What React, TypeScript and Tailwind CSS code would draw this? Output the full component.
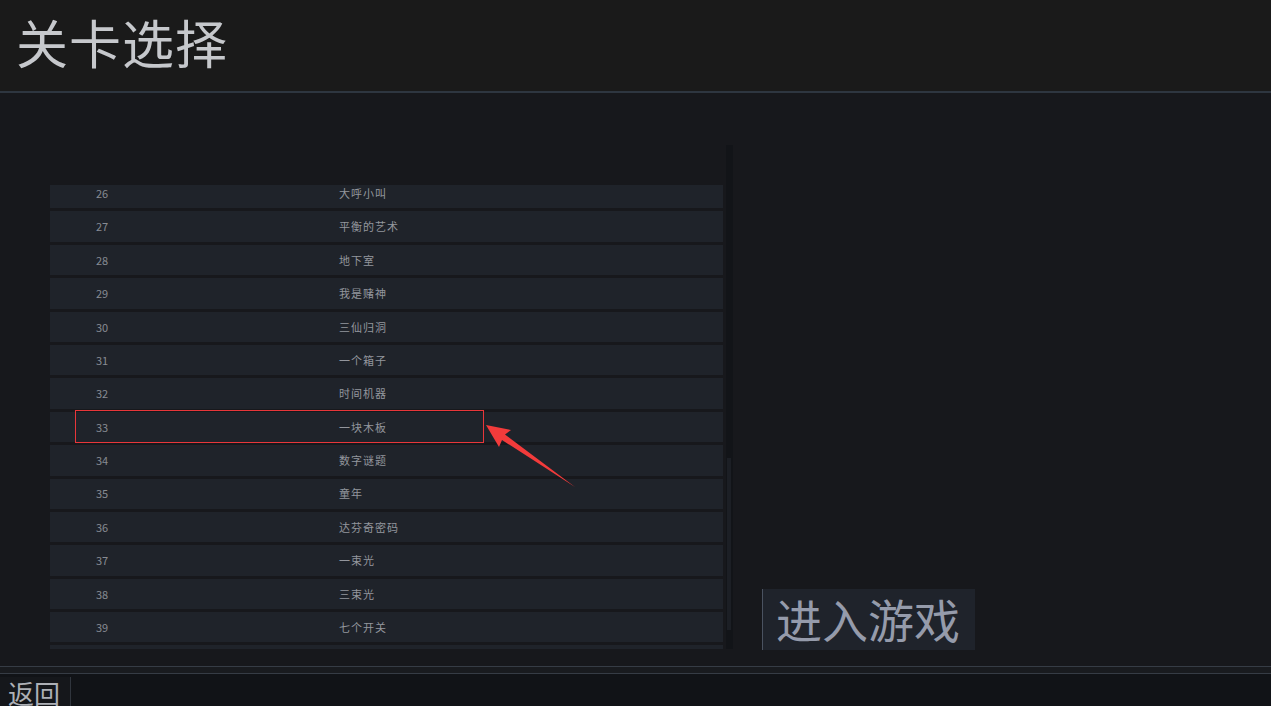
import React from "react";

const levels: [string, string][] = [
  ["26", "大呼小叫"],
  ["27", "平衡的艺术"],
  ["28", "地下室"],
  ["29", "我是赌神"],
  ["30", "三仙归洞"],
  ["31", "一个箱子"],
  ["32", "时间机器"],
  ["33", "一块木板"],
  ["34", "数字谜题"],
  ["35", "童年"],
  ["36", "达芬奇密码"],
  ["37", "一束光"],
  ["38", "三束光"],
  ["39", "七个开关"],
  ["", ""],
];

const font = { fontFamily: '"Noto Sans CJK SC", "Noto Sans", sans-serif' };

export default function App() {
  return (
    <div
      className="w-[1271px] h-[706px] overflow-hidden flex flex-col bg-[#17181c] relative"
      style={font}
    >
      {/* Header */}
      <div className="h-[93px] shrink-0 bg-[#1a1a1a] border-b-2 border-[#2e3640] flex items-center pl-[16px]">
        <span className="text-[52px] leading-none text-[#c6c8cc] tracking-[1px] -mt-[8px]">
          关卡选择
        </span>
      </div>

      {/* Main */}
      <div className="h-[573px] shrink-0 flex">
        <div className="ml-[50px] mt-[52px] w-[683px] h-[504px] flex">
          <div className="w-[673px] flex flex-col">
            <div className="h-[40px] shrink-0" />
            <div className="flex-1 overflow-hidden">
              <div className="flex flex-col gap-[3px] -mt-[7px]">
                {levels.map(([n, name], i) => (
                  <div
                    key={i}
                    className="h-[30.4px] shrink-0 bg-[#1f232a] flex items-center text-[11px] text-[#878b93]"
                  >
                    <span className="w-[289px] pl-[46px]">{n}</span>
                    <span className="tracking-[1px] text-[#93969d]">{name}</span>
                  </div>
                ))}
              </div>
            </div>
          </div>
          <div className="ml-[3px] w-[7px] h-[504px] bg-[#121418] flex flex-col pt-[313px]">
            <div className="ml-[1px] w-[4px] h-[172px] bg-[#1c1f25]" />
          </div>
        </div>

        <div className="ml-[29px] mt-[496px]">
          <div className="w-[213px] h-[61px] bg-[#1f232b] border-l border-[#4a5260] flex items-center pl-[13px]">
            <span className="text-[46px] leading-none text-[#959bab] -mt-[4px]">进入游戏</span>
          </div>
        </div>
      </div>

      {/* Footer separators */}
      <div className="h-[8px] shrink-0 border-t border-b border-[#363c45] bg-[#191b1f]" />
      <div className="flex-1 bg-[#111317] pt-[3px]">
        <div className="w-[71px] h-[40px] border-r border-[#30353d] bg-[#15171b] pl-[8px] flex items-start">
          <span className="text-[26px] leading-none text-[#adb0b6] mt-[3px]">返回</span>
        </div>
      </div>

      {/* Highlight annotation */}
      <div className="absolute left-[75px] top-[410px] w-[409px] h-[33px] border border-[#e8363a]" />
      <svg className="absolute left-0 top-0 pointer-events-none" width="1271" height="706">
        <polygon
          points="486,425 511,430 505,434.5 575,487 502,440 499,447"
          fill="#f23b3b"
        />
      </svg>
    </div>
  );
}
